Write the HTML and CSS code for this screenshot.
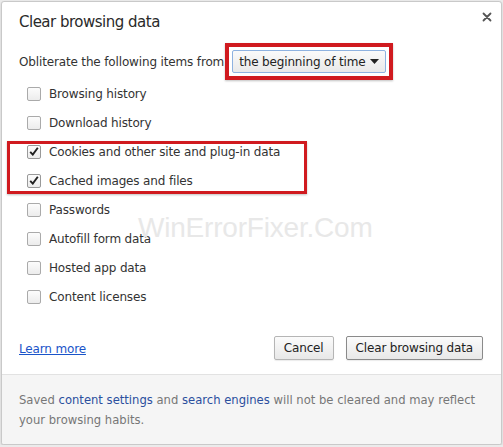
FILE: index.html
```html
<!DOCTYPE html>
<html>
<head>
<meta charset="utf-8">
<link rel="stylesheet" href="styles.css">
</head>
<body>
<div class="dialog">
  <div class="main">
    <div class="header">
      <h1 class="title">Clear browsing data</h1>
      <span class="close">
        <svg width="10" height="10" viewBox="0 0 10 10"><path d="M1.5 1.5 L8.5 8.5 M8.5 1.5 L1.5 8.5" stroke="#555" stroke-width="1.8" stroke-linecap="round"/></svg>
      </span>
    </div>
    <div class="from-row">
      <span>Obliterate the following items from</span>
      <div class="hl-select">
        <div class="select">
          <span>the beginning of time</span>
          <svg width="9" height="5" viewBox="0 0 9 5"><path d="M0 0 H9 L4.5 5 Z" fill="#222"/></svg>
        </div>
      </div>
    </div>
    <div class="items">
      <label class="item"><span class="box"></span>Browsing history</label>
      <label class="item"><span class="box"></span>Download history</label>
      <div class="hl-items">
        <label class="item"><span class="box checked"><svg width="10" height="9" viewBox="0 0 10 9"><path d="M1.2 4.8 L3.8 7.6 L8.8 0.8" fill="none" stroke="#222" stroke-width="1.9"/></svg></span>Cookies and other site and plug-in data</label>
        <label class="item"><span class="box checked"><svg width="10" height="9" viewBox="0 0 10 9"><path d="M1.2 4.8 L3.8 7.6 L8.8 0.8" fill="none" stroke="#222" stroke-width="1.9"/></svg></span>Cached images and files</label>
      </div>
      <label class="item"><span class="box"></span>Passwords</label>
      <label class="item"><span class="box"></span>Autofill form data</label>
      <label class="item"><span class="box"></span>Hosted app data</label>
      <label class="item"><span class="box"></span>Content licenses</label>
      <div class="watermark">WinErrorFixer.Com</div>
    </div>
    <div class="actions">
      <a class="learn" href="#">Learn more</a>
      <div class="buttons">
        <button class="btn">Cancel</button>
        <button class="btn primary">Clear browsing data</button>
      </div>
    </div>
  </div>
  <div class="footer">
    <div class="line">Saved <a href="#">content settings</a> and <a href="#">search engines</a> will not be cleared and may reflect</div>
    <div class="line">your browsing habits.</div>
  </div>
</div>
</body>
</html>
```
FILE: styles.css
```css
html, body {
  margin: 0;
  padding: 0;
  background: #ebebeb;
}
body {
  font-family: "DejaVu Sans", "Liberation Sans", sans-serif;
  font-size: 12px;
  letter-spacing: -0.15px;
  color: #333;
}
.dialog {
  margin: 1px 1px 0 1px;
  width: 499px;
  background: #fff;
  border: 1px solid #c9c9c9;
  border-radius: 3px;
  box-shadow: 0 1px 2px rgba(0,0,0,0.15);
  display: flex;
  flex-direction: column;
  overflow: hidden;
}
.main {
  padding: 0 18px 0 17px;
  display: flex;
  flex-direction: column;
}
.header {
  display: flex;
  justify-content: space-between;
  align-items: flex-start;
  height: 42px;
}
.title {
  margin: 11px 0 0 0;
  font-size: 15px;
  font-weight: normal;
  color: #2a2a2a;
  letter-spacing: -0.5px;
}
.close {
  margin: 10px -9px 0 0;
  display: flex;
}
.from-row {
  display: flex;
  align-items: center;
  height: 35px;
  color: #333;
}
.hl-select {
  margin-left: 1px;
  padding: 3px;
  border: 4px solid #d01a1f;
  box-shadow: 0 1px 2px rgba(0,0,0,0.25);
}
.select {
  display: flex;
  align-items: center;
  justify-content: space-between;
  width: 140px;
  height: 21px;
  padding: 0 6px;
  border: 1px solid #8eb2e0;
  border-radius: 2px;
  background: linear-gradient(#fafafa, #e9e9e9);
  color: #222;
}
.items {
  position: relative;
  display: flex;
  flex-direction: column;
}
.item {
  display: flex;
  align-items: center;
  height: 29px;
  padding-left: 8px;
  color: #333;
}
.hl-items {
  position: relative;
  display: flex;
  flex-direction: column;
}
.hl-items::before {
  content: "";
  position: absolute;
  left: -12px;
  top: 4px;
  bottom: 1px;
  width: 294px;
  border: 3px solid #d01a1f;
  box-shadow: 0 1px 2px rgba(0,0,0,0.25);
  pointer-events: none;
}
.box {
  width: 12px;
  height: 12px;
  border: 1px solid #aaa;
  border-radius: 2px;
  background: linear-gradient(#fcfcfc, #ececec);
  margin-right: 8px;
  display: flex;
  align-items: center;
  justify-content: center;
  flex-shrink: 0;
}
.box.checked {
  border-color: #999;
}
.watermark {
  position: absolute;
  left: 119px;
  top: 133px;
  font-family: "Liberation Sans", sans-serif;
  font-size: 28px;
  letter-spacing: -0.2px;
  color: #e8e8e8;
  pointer-events: none;
}
.actions {
  display: flex;
  justify-content: space-between;
  align-items: center;
  margin-top: 24px;
  height: 26px;
}
.learn {
  color: #1a54c9;
  text-decoration: underline;
  margin-top: 2px;
}
.buttons {
  display: flex;
  gap: 12px;
}
.btn {
  font-family: "DejaVu Sans", "Liberation Sans", sans-serif;
  font-size: 12px;
  letter-spacing: -0.15px;
  color: #222;
  height: 24px;
  padding: 0 9px;
  border: 1px solid #b5b5b5;
  border-radius: 2px;
  background: linear-gradient(#fbfbfb, #e8e8e8);
  box-shadow: 0 1px 1px rgba(0,0,0,0.08);
}
.btn.primary {
  border-color: #8a8a8a;
}
.footer {
  background: #f5f5f5;
  border-top: 1px solid #e2e2e2;
  margin-top: 13px;
  padding: 15px 18px 14px 17px;
  font-size: 11.6px;
  letter-spacing: 0;
  line-height: 20px;
  color: #777;
}
.line {
  white-space: nowrap;
}
.footer a {
  color: #2b4f9e;
  text-decoration: none;
}
```
